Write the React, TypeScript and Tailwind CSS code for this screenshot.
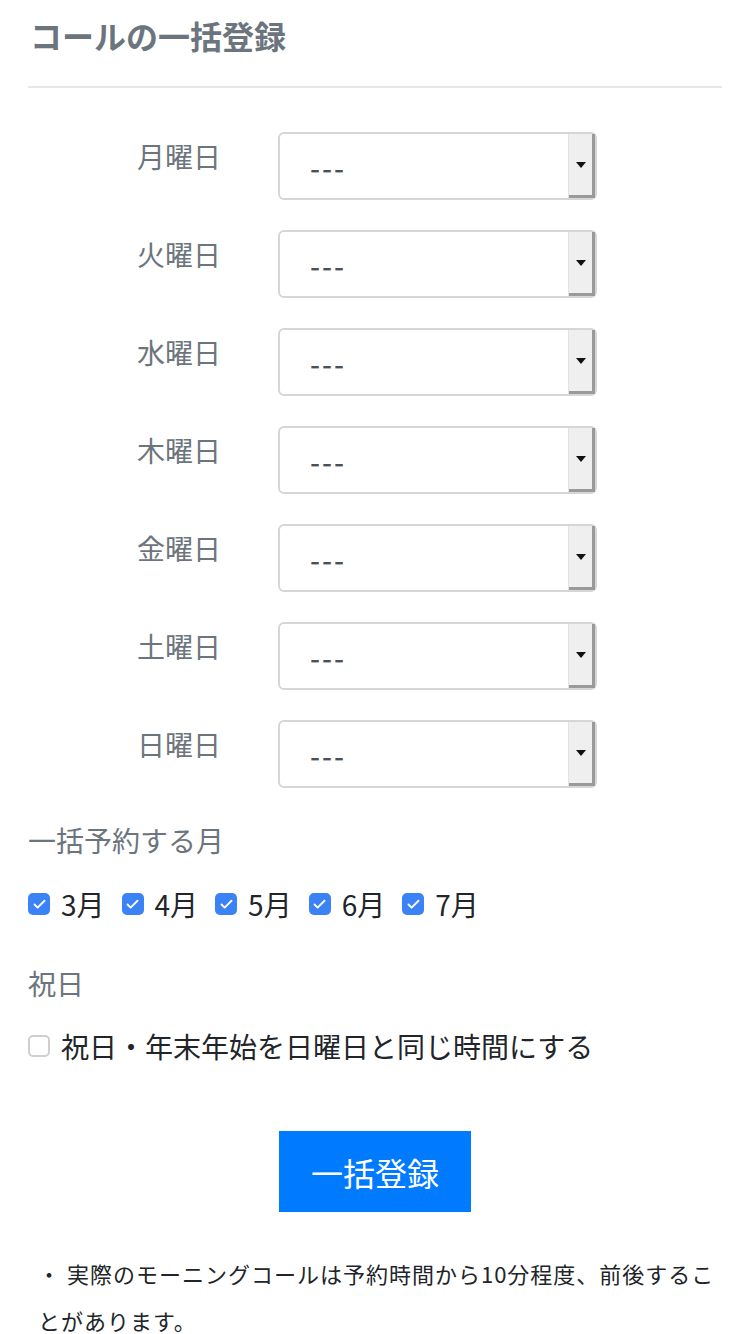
import { Check } from 'lucide-react'

const days = ['月曜日', '火曜日', '水曜日', '木曜日', '金曜日', '土曜日', '日曜日']
const months = ['3月', '4月', '5月', '6月', '7月']

function FakeSelect() {
  return (
    <div className="flex h-[68px] w-[319px] items-stretch rounded-[6px] border-2 border-[#d4d6d9] bg-white">
      <div className="flex flex-1 items-center pl-[30px] pt-[2px] text-[28px] font-medium tracking-[2px] text-[#495057]">---</div>
      <div className="flex w-[27px] items-center justify-center border-l border-[#e2e2e2] bg-[#efefef] shadow-[inset_-3px_-3px_0_#9a9a9a]">
        <svg width="10" height="7" viewBox="0 0 10 7" className="mb-[2px] mr-[2px]">
          <polygon points="0,0 10,0 5,6" fill="#111" />
        </svg>
      </div>
    </div>
  )
}

function Box({ checked }: { checked: boolean }) {
  return checked ? (
    <span className="flex h-[22px] w-[22px] items-center justify-center rounded-[5px] bg-[#3b82f6]">
      <Check className="h-[15px] w-[15px] text-white" strokeWidth={3} />
    </span>
  ) : (
    <span className="h-[22px] w-[22px] rounded-[5px] border-2 border-[#cfcfcf] bg-white" />
  )
}

export default function App() {
  return (
    <div className="min-h-[1334px] bg-white px-[28px] font-['Noto_Sans_CJK_JP','Noto_Sans',sans-serif]">
      <h1 className="pt-[12px] pl-[2px] text-[32px] font-bold leading-[46px] text-[#6c757d]">コールの一括登録</h1>
      <hr className="mt-[28px] border-t-2 border-[#e5e7eb]" />

      <div className="mt-[44px] flex flex-col gap-[30px]">
        {days.map(d => (
          <div key={d} className="flex items-start">
            <div className="w-[250px] pr-[57px] pt-[3px] text-right text-[28px] leading-[42px] text-[#6c757d]">{d}</div>
            <FakeSelect />
          </div>
        ))}
      </div>

      <div className="mt-[30px] text-[28px] leading-[44px] text-[#6c757d]">一括予約する月</div>
      <div className="mt-[20px] flex gap-[17px]">
        {months.map(m => (
          <label key={m} className="flex items-center gap-[11px]">
            <Box checked />
            <span className="text-[28px] leading-[44px] text-[#212529]">{m}</span>
          </label>
        ))}
      </div>

      <div className="mt-[35px] text-[28px] leading-[44px] text-[#6c757d]">祝日</div>
      <label className="mt-[19px] flex items-center gap-[11px]">
        <Box checked={false} />
        <span className="text-[28px] leading-[44px] text-[#212529]">祝日・年末年始を日曜日と同じ時間にする</span>
      </label>

      <div className="mt-[63px] flex justify-center">
        <button className="h-[81px] w-[192px] bg-[#007bff] text-[32px] text-white">一括登録</button>
      </div>

      <p className="mt-[38px] pl-[10px] text-[22px] leading-[47px] tracking-[1px] text-[#212529]">
        ・ 実際のモーニングコールは予約時間から10分程度、前後することがあります。
      </p>
    </div>
  )
}
